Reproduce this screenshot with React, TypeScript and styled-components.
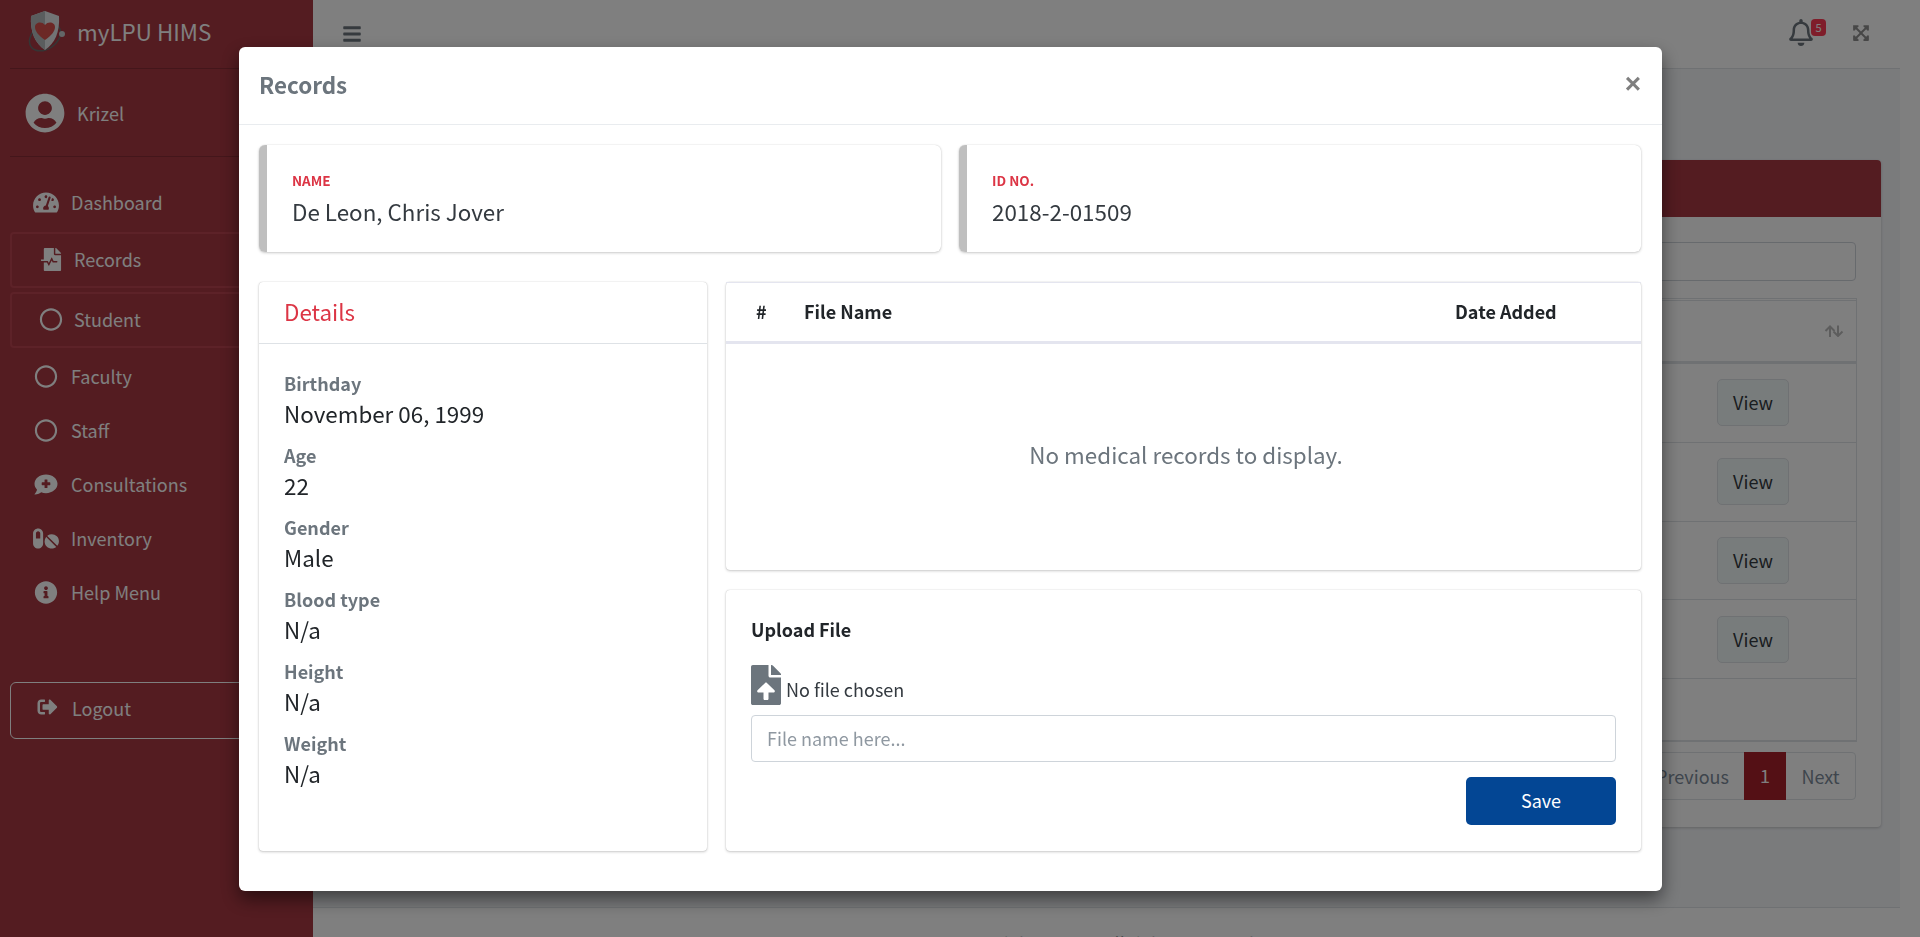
import React from "react";
import styled, { createGlobalStyle } from "styled-components";
import {
  FaTachometerAlt, FaFileMedicalAlt, FaRegCircle, FaCommentMedical, FaPills,
  FaInfoCircle, FaSignOutAlt, FaUserCircle, FaBars, FaRegBell, FaExpandArrowsAlt, FaFileUpload,
} from "react-icons/fa";

const font = `"Noto Sans CJK SC", "Noto Sans", sans-serif`;

const Global = createGlobalStyle`
  html, body { margin: 0; padding: 0; height: 100%; overflow: hidden; }
  body { font-family: ${font}; font-size: 18px; color: #212529; background: #fff; }
  #root { height: 937px; }
  * { box-sizing: border-box; }
`;

const Page = styled.div`
  display: flex;
  height: 937px;
  overflow: hidden;
`;

const Sidebar = styled.aside`
  width: 313px;
  flex: none;
  background: #a83842;
  color: #fff;
  display: flex;
  flex-direction: column;
  padding: 0 10px;
`;

const Brand = styled.div`
  height: 69px;
  display: flex;
  align-items: center;
  gap: 10px;
  padding: 0 0 6px 15px;
  border-bottom: 1px solid rgba(0, 0, 0, 0.18);
  font-size: 22.4px;
  line-height: 30px;
`;

const UserRow = styled.div`
  height: 88px;
  display: flex;
  align-items: center;
  gap: 12px;
  padding-left: 15px;
  border-bottom: 1px solid rgba(0, 0, 0, 0.18);
  font-size: 18px;
`;

const Nav = styled.nav`
  display: flex;
  flex-direction: column;
  margin-top: 19px;
`;

const NavItem = styled.div<{ $boxed?: boolean }>`
  display: flex;
  align-items: center;
  height: ${(p) => (p.$boxed ? "56px" : "54px")};
  margin-top: ${(p) => (p.$boxed ? "2px" : "0")};
  margin-bottom: ${(p) => (p.$boxed ? "2px" : "0")};
  padding-left: ${(p) => (p.$boxed ? "26px" : "23px")};
  padding-bottom: 2px;
  gap: ${(p) => (p.$boxed ? "10px" : "12px")};
  font-size: 18px;
  border: ${(p) => (p.$boxed ? "2px solid #bb4450" : "none")};
  border-radius: 4px;
  svg { width: 26px; height: 23px; flex: none; }
`;

const LogoutBtn = styled.div`
  margin-top: 62px;
  height: 57px;
  display: flex;
  align-items: center;
  gap: 13px;
  padding-left: 25px;
  padding-bottom: 5px;
  font-size: 18px;
  border: 1px solid #fff;
  border-radius: 6px;
  svg { width: 23px; height: 20px; margin-top: -3px; }
`;

const Main = styled.div`
  width: 1587px;
  flex: none;
  display: flex;
  flex-direction: column;
  min-width: 0;
`;

const TopBar = styled.header`
  height: 69px;
  flex: none;
  background: #fff;
  border-bottom: 1px solid #dee2e6;
  display: flex;
  align-items: center;
  justify-content: space-between;
  padding: 0 30px 0 29px;
`;

const Burger = styled.div`
  color: #6c757d;
  display: flex;
  svg { width: 20px; height: 20px; }
`;

const TopIcons = styled.div`
  display: flex;
  align-items: center;
  gap: 39px;
`;

const BellWrap = styled.div`
  position: relative;
  display: flex;
  color: #6c757d;
  margin-top: -3px;
  svg { width: 24px; height: 27px; }
`;

const Badge = styled.span`
  position: absolute;
  top: 0;
  right: -13px;
  width: 15px;
  height: 17px;
  border-radius: 4px;
  background: #ff3a55;
  color: #fff;
  font-size: 11px;
  line-height: 17px;
  text-align: center;
`;

const Expand = styled.div`
  display: flex;
  color: #8f8f8f;
  margin-top: -3px;
  svg { width: 18px; height: 18px; }
`;

const Content = styled.main`
  flex: 1;
  display: flex;
  flex-direction: column;
  padding-top: 91px;
  min-height: 0;
  background: #f4f6f9;
`;

const RecordsCard = styled.section`
  margin-right: 19px;
  height: 667px;
  background: #fff;
  border-radius: 4px;
  box-shadow: 0 1px 3px rgba(0, 0, 0, 0.2);
  display: flex;
  flex-direction: column;
`;

const CardHead = styled.div`
  height: 57px;
  flex: none;
  background: #a83842;
  border-radius: 4px 4px 0 0;
`;

const CardBody = styled.div`
  padding: 25px 24px 0 25px;
  display: flex;
  flex-direction: column;
`;

const Search = styled.div`
  height: 39px;
  border: 1px solid #ced4da;
  border-radius: 4px;
  margin-right: 1px;
`;

const BgTable = styled.div`
  margin-top: 17px;
  border-right: 1px solid #dee2e6;
  border-top: 3px double #dee2e6;
  border-bottom: 2px solid #dee2e6;
  height: 444px;
  display: flex;
  flex-direction: column;
`;

const BgHeadRow = styled.div`
  height: 63px;
  flex: none;
  border-bottom: 3px solid #dee2e6;
  display: flex;
  align-items: center;
  justify-content: flex-end;
  padding: 0 12px 1px 0;
  color: #bbb;
`;

const BgRow = styled.div`
  height: 78.75px;
  flex: none;
  border-bottom: 1px solid #dee2e6;
  display: flex;
  align-items: center;
  justify-content: flex-end;
  padding-right: 67px;
`;

const ViewBtn = styled.div`
  width: 72px;
  height: 47px;
  border: 1px solid #dee2e6;
  border-radius: 5px;
  background: #f0f8f8;
  font-size: 18px;
  line-height: 45px;
  text-align: center;
  color: #343a40;
`;

const Pager = styled.div`
  margin: 10px 1px 0 0;
  align-self: flex-end;
  height: 48px;
  display: flex;
  border: 1px solid #dee2e6;
  border-radius: 4px;
  font-size: 18px;
  line-height: 46px;
  color: #7d8b9a;
`;

const PageLink = styled.div<{ $active?: boolean; $pad?: string }>`
  padding: 0 ${(p) => p.$pad ?? "0"};
  width: ${(p) => (p.$active ? "42px" : "auto")};
  height: ${(p) => (p.$active ? "48px" : "46px")};
  margin-top: ${(p) => (p.$active ? "-1px" : "0")};
  text-align: center;
  background: ${(p) => (p.$active ? "#a8202a" : "transparent")};
  color: ${(p) => (p.$active ? "#fff" : "inherit")};
`;

const Footer = styled.footer`
  flex: none;
  height: 30px;
  overflow: hidden;
  background: #fff;
  border-top: 1px solid #dee2e6;
  padding-top: 22px;
  text-align: center;
  font-size: 18px;
  line-height: 27px;
  color: #343a40;
`;

const Overlay = styled.div`
  position: fixed;
  inset: 0;
  background: rgba(0, 0, 0, 0.5);
`;

const Modal = styled.div`
  position: fixed;
  left: 239px;
  top: 47px;
  width: 1423px;
  height: 844px;
  background: #fff;
  border-radius: 6px;
  box-shadow: 0 8px 18px rgba(0, 0, 0, 0.5);
  display: flex;
  flex-direction: column;
`;

const ModalHead = styled.div`
  height: 78px;
  flex: none;
  display: flex;
  align-items: flex-start;
  justify-content: space-between;
  padding: 19px 21px 0 20px;
  border-bottom: 1px solid #e9ecef;
`;

const ModalTitle = styled.h4`
  margin: 0;
  font-size: 22.4px;
  line-height: 36px;
  font-weight: 700;
  color: #6c757d;
`;

const Close = styled.span`
  font-size: 28px;
  line-height: 28px;
  font-weight: 700;
  color: #7f7f7f;
  margin-top: 4px;
  font-family: "Liberation Sans", sans-serif;
`;

const ModalBody = styled.div`
  padding: 20px 21px 0 20px;
  display: flex;
  flex-direction: column;
  gap: 30px;
`;

const InfoRow = styled.div`
  display: grid;
  grid-template-columns: 682px 682px;
  gap: 18px;
`;

const InfoCard = styled.div`
  height: 107px;
  border-radius: 6px;
  border-left: 8px solid #bfbfbf;
  box-shadow: 0 0 1px rgba(0, 0, 0, 0.2), 0 1px 3px rgba(0, 0, 0, 0.2);
  padding: 27px 25px 0 25px;
`;

const InfoLabel = styled.div`
  font-size: 13.5px;
  line-height: 16px;
  font-weight: 700;
  color: #dc3545;
  text-transform: uppercase;
`;

const InfoValue = styled.div`
  font-size: 22.4px;
  line-height: 30px;
  margin-top: 8px;
  color: #343a40;
`;

const Columns = styled.div`
  display: grid;
  grid-template-columns: 448px 915px;
  gap: 19px;
`;

const Card = styled.div`
  background: #fff;
  border-radius: 4px;
  box-shadow: 0 0 1px rgba(0, 0, 0, 0.25), 0 1px 3px rgba(0, 0, 0, 0.2);
`;

const DetailsCard = styled(Card)`
  height: 569px;
`;

const DetailsHead = styled.div`
  height: 62px;
  border-bottom: 1px solid #dee2e6;
  padding: 11px 25px 0;
  font-size: 22.4px;
  line-height: 36px;
  color: #dc3545;
`;

const DetailsBody = styled.div`
  padding: 26px 25px 0;
`;

const DetailLabel = styled.div`
  font-size: 18px;
  line-height: 26px;
  font-weight: 700;
  color: #6c757d;
`;

const DetailValue = styled.div`
  font-size: 22.4px;
  line-height: 33px;
  padding-top: 1px;
  margin-bottom: 12px;
  color: #212529;
`;

const RightCol = styled.div`
  display: flex;
  flex-direction: column;
  gap: 20px;
`;

const RecordsTable = styled(Card)`
  height: 288px;
`;

const TableHead = styled.div`
  height: 62px;
  border-bottom: 3px solid #e4e5ef;
  border-top: 1px solid #e4e5ef;
  display: flex;
  align-items: center;
  padding: 0 12px 2px 30px;
  font-size: 18px;
  font-weight: 700;
  color: #212529;
`;

const HeadHash = styled.span`
  width: 48px;
`;

const HeadName = styled.span`
  flex: 1;
`;

const HeadDate = styled.span`
  width: 174px;
`;

const EmptyState = styled.div`
  height: 222px;
  display: flex;
  align-items: center;
  justify-content: center;
  padding: 0 0 2px 5px;
  font-size: 22.4px;
  color: #6c757d;
`;

const UploadCard = styled(Card)`
  height: 261px;
  padding: 25px 25px 0;
`;

const UploadTitle = styled.div`
  font-size: 18px;
  line-height: 28px;
  font-weight: 700;
  color: #212529;
`;

const FileRow = styled.div`
  display: flex;
  align-items: flex-end;
  gap: 5px;
  margin-top: 22px;
  font-size: 18px;
  line-height: 32px;
  color: #343a40;
  svg { width: 30px; height: 40px; color: #6c757d; flex: none; }
`;

const FileInput = styled.input`
  display: block;
  width: 100%;
  height: 47px;
  margin-top: 10px;
  border: 1px solid #ced4da;
  border-radius: 4px;
  padding: 0 15px 2px;
  font-family: ${font};
  font-size: 18px;
  &::placeholder { color: #8f98a1; opacity: 1; }
`;

const SaveRow = styled.div`
  display: flex;
  justify-content: flex-end;
  margin-top: 15px;
`;

const SaveBtn = styled.button`
  width: 150px;
  height: 48px;
  border: none;
  border-radius: 5px;
  padding: 0 0 2px;
  background: #034694;
  color: #fff;
  font-family: ${font};
  font-size: 18px;
`;

const Logo = () => (
  <svg width="42" height="42" viewBox="0 0 42 42" aria-hidden>
    <ellipse cx="20" cy="27" rx="17" ry="12" fill="none" stroke="#6a6a6a" strokeWidth="1.5" transform="rotate(-35 20 27)" />
    <path d="M20 1 L34 6 C35 22 30 33 20 40 C10 33 5 22 6 6 Z" fill="#e4e8ea" />
    <path d="M20 1 L20 40 C10 33 5 22 6 6 Z" fill="#b5bbbd" />
    <path d="M20 30 C13 25 10 21 10 17 C10 12 17 11 20 15 C23 11 30 12 30 17 C30 21 27 25 20 30 Z" fill="#d8504c" />
    <circle cx="37" cy="24" r="3" fill="#c7cccf" />
  </svg>
);

const UserIcon = styled(FaUserCircle)`
  width: 40px;
  height: 40px;
  flex: none;
`;

const SortArrows = () => (
  <svg width="20" height="12" viewBox="0 0 20 12" aria-hidden fill="none" stroke="currentColor" strokeWidth="2">
    <path d="M6 12V1.500M1.500 6 6 1.500 10.500 6M14 .5V11M9.500 6.500 14 11l4.500-4.500" />
  </svg>
);

const navItems = [
  { label: "Dashboard", icon: <FaTachometerAlt /> },
  { label: "Records", icon: <FaFileMedicalAlt />, boxed: true },
  { label: "Student", icon: <FaRegCircle />, boxed: true },
  { label: "Faculty", icon: <FaRegCircle /> },
  { label: "Staff", icon: <FaRegCircle /> },
  { label: "Consultations", icon: <FaCommentMedical /> },
  { label: "Inventory", icon: <FaPills /> },
  { label: "Help Menu", icon: <FaInfoCircle /> },
];

const details = [
  ["Birthday", "November 06, 1999"],
  ["Age", "22"],
  ["Gender", "Male"],
  ["Blood type", "N/a"],
  ["Height", "N/a"],
  ["Weight", "N/a"],
];

export default function App() {
  return (
    <>
      <Global />
      <Page>
        <Sidebar>
          <Brand><Logo />myLPU HIMS</Brand>
          <UserRow><UserIcon />Krizel</UserRow>
          <Nav>
            {navItems.map((n) => (
              <NavItem key={n.label} $boxed={n.boxed}>{n.icon}{n.label}</NavItem>
            ))}
          </Nav>
          <LogoutBtn><FaSignOutAlt />Logout</LogoutBtn>
        </Sidebar>
        <Main>
          <TopBar>
            <Burger><FaBars /></Burger>
            <TopIcons>
              <BellWrap><FaRegBell /><Badge>5</Badge></BellWrap>
              <Expand><FaExpandArrowsAlt /></Expand>
            </TopIcons>
          </TopBar>
          <Content>
            <RecordsCard>
              <CardHead />
              <CardBody>
                <Search />
                <BgTable>
                  <BgHeadRow><SortArrows /></BgHeadRow>
                  {[0, 1, 2, 3].map((i) => (
                    <BgRow key={i}><ViewBtn>View</ViewBtn></BgRow>
                  ))}
                </BgTable>
                <Pager>
                  <PageLink $pad="15px">Previous</PageLink>
                  <PageLink $active>1</PageLink>
                  <PageLink $pad="15.5px">Next</PageLink>
                </Pager>
              </CardBody>
            </RecordsCard>
          </Content>
          <Footer>Copyright © 2021 All rights reserved.</Footer>
        </Main>
      </Page>
      <Overlay />
      <Modal>
        <ModalHead>
          <ModalTitle>Records</ModalTitle>
          <Close>×</Close>
        </ModalHead>
        <ModalBody>
          <InfoRow>
            <InfoCard>
              <InfoLabel>Name</InfoLabel>
              <InfoValue>De Leon, Chris Jover</InfoValue>
            </InfoCard>
            <InfoCard>
              <InfoLabel>ID No.</InfoLabel>
              <InfoValue>2018-2-01509</InfoValue>
            </InfoCard>
          </InfoRow>
          <Columns>
            <DetailsCard>
              <DetailsHead>Details</DetailsHead>
              <DetailsBody>
                {details.map(([k, v]) => (
                  <div key={k}>
                    <DetailLabel>{k}</DetailLabel>
                    <DetailValue>{v}</DetailValue>
                  </div>
                ))}
              </DetailsBody>
            </DetailsCard>
            <RightCol>
              <RecordsTable>
                <TableHead>
                  <HeadHash>#</HeadHash>
                  <HeadName>File Name</HeadName>
                  <HeadDate>Date Added</HeadDate>
                </TableHead>
                <EmptyState>No medical records to display.</EmptyState>
              </RecordsTable>
              <UploadCard>
                <UploadTitle>Upload File</UploadTitle>
                <FileRow><FaFileUpload />No file chosen</FileRow>
                <FileInput placeholder="File name here..." />
                <SaveRow><SaveBtn>Save</SaveBtn></SaveRow>
              </UploadCard>
            </RightCol>
          </Columns>
        </ModalBody>
      </Modal>
    </>
  );
}
